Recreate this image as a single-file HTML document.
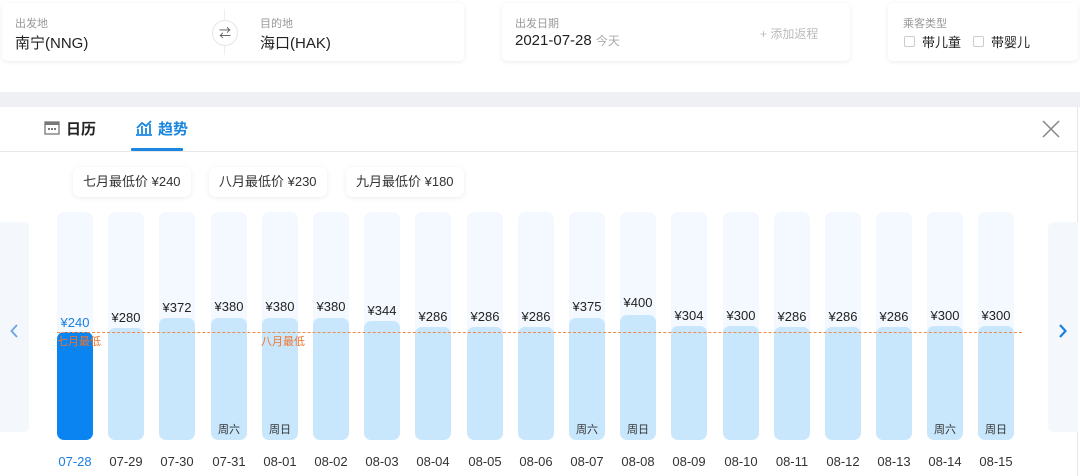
<!DOCTYPE html>
<html><head><meta charset="utf-8"><style>
*{margin:0;padding:0;box-sizing:border-box}
body{width:1080px;height:476px;overflow:hidden;background:#fff;font-family:"Liberation Sans","Noto Sans CJK SC",sans-serif;position:relative;color:#333}
.a{position:absolute}
.card{position:absolute;top:3px;height:58px;background:#fff;border-radius:5px;box-shadow:0 1px 5px rgba(0,0,0,.08)}
.sm{position:absolute;font-size:11px;color:#999;top:12px}
.big{position:absolute;font-size:15px;color:#222;top:29px}
.bg{position:absolute;top:212px;width:36px;height:228px;background:#f4f9ff;border-radius:7px}
.fill{position:absolute;width:36px;background:#c9e7fc;border-radius:7px;bottom:36px}
.pr{position:absolute;width:50px;text-align:center;font-size:13px;color:#222}
.dt{position:absolute;top:454px;width:50px;text-align:center;font-size:13px;color:#333}
.wk{position:absolute;top:421px;width:36px;text-align:center;font-size:11px;color:#333}
.pill{position:absolute;top:167px;height:30px;line-height:30px;background:#fff;border-radius:7px;box-shadow:0 1px 6px rgba(0,0,0,.08);font-size:13px;color:#333;padding:0 10px}
.low{position:absolute;top:333px;font-size:11px;color:#f0742d}
</style></head><body>
<div class="card" style="left:2px;width:462px">
 <div class="sm" style="left:13px">出发地</div><div class="big" style="left:13px">南宁(NNG)</div>
 <div class="a" style="left:222px;top:6px;width:1px;height:46px;background:#eee"></div>
 <div class="a" style="left:210px;top:17px;width:26px;height:26px;border-radius:50%;background:#fff;border:1px solid #e6e6e6;font-size:12px;line-height:24px;text-align:center;color:#555">⇄</div>
 <div class="sm" style="left:258px">目的地</div><div class="big" style="left:258px">海口(HAK)</div>
</div>
<div class="card" style="left:502px;width:348px">
 <div class="sm" style="left:13px">出发日期</div><div class="big" style="left:13px">2021-07-28 <span style="font-size:12px;color:#aaa">今天</span></div>
 <div class="a" style="left:258px;top:22px;font-size:12px;color:#bbb">+ 添加返程</div>
</div>
<div class="card" style="left:888px;width:190px">
 <div class="sm" style="left:15px">乘客类型</div>
 <div class="a" style="left:16px;top:33px;width:11px;height:11px;border:1px solid #ccc;border-radius:2px"></div>
 <div class="a" style="left:34px;top:29px;font-size:13px;color:#222">带儿童</div>
 <div class="a" style="left:85px;top:33px;width:11px;height:11px;border:1px solid #ccc;border-radius:2px"></div>
 <div class="a" style="left:103px;top:29px;font-size:13px;color:#222">带婴儿</div>
</div>
<div class="a" style="left:0;top:92px;width:1080px;height:15px;background:#eef0f4"></div>
<div class="a" style="left:1077px;top:107px;width:1px;height:369px;background:#e6e6e6"></div>
<div class="a" style="left:0;top:151px;width:1078px;height:1px;background:#e8e8e8"></div>
<svg class="a" style="left:44px;top:120px" width="16" height="15" viewBox="0 0 16 15"><rect x="1" y="2" width="14" height="12" fill="none" stroke="#777" stroke-width="1.3"/><rect x="1" y="2" width="14" height="3" fill="#777"/><rect x="4" y="8" width="2" height="2" fill="#777"/><rect x="7" y="8" width="2" height="2" fill="#777"/><rect x="10" y="8" width="2" height="2" fill="#777"/></svg>
<div class="a" style="left:66px;top:118px;font-size:15px;font-weight:bold;color:#222">日历</div>
<svg class="a" style="left:135px;top:119px" width="18" height="17" viewBox="0 0 18 17"><path d="M1 16H17M3 15V10M7 15V7M11 15V9M15 15V5M2 9L7 4L11 7L16 2" fill="none" stroke="#1a86e0" stroke-width="1.8"/></svg>
<div class="a" style="left:158px;top:118px;font-size:15px;font-weight:bold;color:#1a86e0">趋势</div>
<div class="a" style="left:131px;top:148px;width:52px;height:3px;background:#1a86e0;border-radius:1px"></div>
<svg class="a" style="left:1042px;top:120px" width="18" height="18" viewBox="0 0 18 18"><path d="M1 1L17 17M17 1L1 17" stroke="#888" stroke-width="1.5"/></svg>
<div class="pill" style="left:73px">七月最低价 ¥240</div>
<div class="pill" style="left:209px">八月最低价 ¥230</div>
<div class="pill" style="left:346px">九月最低价 ¥180</div>
<div class="a" style="left:0;top:222px;width:29px;height:210px;background:#f4f8fc;border-radius:0 6px 6px 0"></div>
<svg class="a" style="left:10px;top:324px" width="8" height="14" viewBox="0 0 8 14"><path d="M7 1L1.5 7L7 13" fill="none" stroke="#6aa5e5" stroke-width="1.8"/></svg>
<div class="a" style="left:1048px;top:222px;width:30px;height:210px;background:#f4f8fc;border-radius:6px 0 0 6px"></div>
<svg class="a" style="left:1059px;top:324px" width="8" height="14" viewBox="0 0 8 14"><path d="M1 1L6.5 7L1 13" fill="none" stroke="#1a7fe0" stroke-width="2.2"/></svg>

<div class="bg" style="left:57px"></div><div class="fill" style="left:57px;top:332px;background:#0a84f0"></div><div class="pr" style="left:50px;top:315px;color:#1a7fe0">¥240</div><div class="dt" style="left:50px;color:#1a7fe0">07-28</div>
<div class="bg" style="left:108px"></div><div class="fill" style="left:108px;top:328px"></div><div class="pr" style="left:101px;top:310px">¥280</div><div class="dt" style="left:101px">07-29</div>
<div class="bg" style="left:159px"></div><div class="fill" style="left:159px;top:318px"></div><div class="pr" style="left:152px;top:300px">¥372</div><div class="dt" style="left:152px">07-30</div>
<div class="bg" style="left:211px"></div><div class="fill" style="left:211px;top:318px"></div><div class="pr" style="left:204px;top:299px">¥380</div><div class="dt" style="left:204px">07-31</div><div class="wk" style="left:211px">周六</div>
<div class="bg" style="left:262px"></div><div class="fill" style="left:262px;top:318px"></div><div class="pr" style="left:255px;top:299px">¥380</div><div class="dt" style="left:255px">08-01</div><div class="wk" style="left:262px">周日</div>
<div class="bg" style="left:313px"></div><div class="fill" style="left:313px;top:318px"></div><div class="pr" style="left:306px;top:299px">¥380</div><div class="dt" style="left:306px">08-02</div>
<div class="bg" style="left:364px"></div><div class="fill" style="left:364px;top:321px"></div><div class="pr" style="left:357px;top:303px">¥344</div><div class="dt" style="left:357px">08-03</div>
<div class="bg" style="left:415px"></div><div class="fill" style="left:415px;top:327px"></div><div class="pr" style="left:408px;top:309px">¥286</div><div class="dt" style="left:408px">08-04</div>
<div class="bg" style="left:467px"></div><div class="fill" style="left:467px;top:327px"></div><div class="pr" style="left:460px;top:309px">¥286</div><div class="dt" style="left:460px">08-05</div>
<div class="bg" style="left:518px"></div><div class="fill" style="left:518px;top:327px"></div><div class="pr" style="left:511px;top:309px">¥286</div><div class="dt" style="left:511px">08-06</div>
<div class="bg" style="left:569px"></div><div class="fill" style="left:569px;top:318px"></div><div class="pr" style="left:562px;top:299px">¥375</div><div class="dt" style="left:562px">08-07</div><div class="wk" style="left:569px">周六</div>
<div class="bg" style="left:620px"></div><div class="fill" style="left:620px;top:315px"></div><div class="pr" style="left:613px;top:295px">¥400</div><div class="dt" style="left:613px">08-08</div><div class="wk" style="left:620px">周日</div>
<div class="bg" style="left:671px"></div><div class="fill" style="left:671px;top:326px"></div><div class="pr" style="left:664px;top:308px">¥304</div><div class="dt" style="left:664px">08-09</div>
<div class="bg" style="left:723px"></div><div class="fill" style="left:723px;top:326px"></div><div class="pr" style="left:716px;top:308px">¥300</div><div class="dt" style="left:716px">08-10</div>
<div class="bg" style="left:774px"></div><div class="fill" style="left:774px;top:327px"></div><div class="pr" style="left:767px;top:309px">¥286</div><div class="dt" style="left:767px">08-11</div>
<div class="bg" style="left:825px"></div><div class="fill" style="left:825px;top:327px"></div><div class="pr" style="left:818px;top:309px">¥286</div><div class="dt" style="left:818px">08-12</div>
<div class="bg" style="left:876px"></div><div class="fill" style="left:876px;top:327px"></div><div class="pr" style="left:869px;top:309px">¥286</div><div class="dt" style="left:869px">08-13</div>
<div class="bg" style="left:927px"></div><div class="fill" style="left:927px;top:326px"></div><div class="pr" style="left:920px;top:308px">¥300</div><div class="dt" style="left:920px">08-14</div><div class="wk" style="left:927px">周六</div>
<div class="bg" style="left:978px"></div><div class="fill" style="left:978px;top:326px"></div><div class="pr" style="left:971px;top:308px">¥300</div><div class="dt" style="left:971px">08-15</div><div class="wk" style="left:978px">周日</div>

<div class="a" style="left:57px;top:332px;width:965px;border-top:1px dashed #f08a4b"></div>
<div class="low" style="left:57px">七月最低</div>
<div class="low" style="left:261px">八月最低</div>
</body></html>
